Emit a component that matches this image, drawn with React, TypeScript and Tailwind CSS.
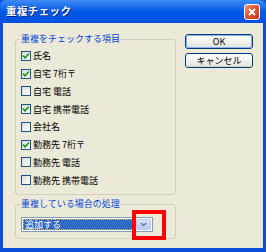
import { ChevronDown } from 'lucide-react';

const font = { fontFamily: '"Noto Sans CJK JP", "Noto Sans", sans-serif' };

const items = [
    { label: '氏名', checked: true },
    { label: '自宅 7桁〒', checked: true },
    { label: '自宅 電話', checked: false },
    { label: '自宅 携帯電話', checked: true },
    { label: '会社名', checked: false },
    { label: '勤務先 7桁〒', checked: true },
    { label: '勤務先 電話', checked: false },
    { label: '勤務先 携帯電話', checked: false },
];

function CheckBox({ checked }: { checked: boolean }) {
    return (
        <div className="w-[10px] h-[10px] border border-[#1c5180] bg-gradient-to-br from-[#dcdcd7] to-white flex items-center justify-center">
            {checked && (
                <svg width="8" height="8" viewBox="0 0 8 8">
                    <path d="M1 3.5 L3 5.8 L7 1.5" stroke="#21a121" strokeWidth="1.8" fill="none" />
                </svg>
            )}
        </div>
    );
}

function XpButton({ label, isDefault }: { label: string; isDefault?: boolean }) {
    return (
        <div className="h-[15px] w-[68px] rounded-[3px] border border-[#003c74] bg-gradient-to-b from-white to-[#e3e3db]">
            <div
                className={`h-full w-full rounded-[2px] flex items-center justify-center text-[9px] leading-none text-black ${
                    isDefault ? 'border border-[#8db2f3]' : 'border-b border-[#d6d0c5]'
                }`}
            >
                {label}
            </div>
        </div>
    );
}

export default function App() {
    return (
        <div className="relative w-[266px] h-[252px] flex flex-col bg-[#0b4fd9]" style={font}>
            {/* title bar */}
            <div className="h-[23px] flex items-center justify-between pl-[6px] pr-[6px] rounded-t-[6px] bg-gradient-to-b from-[#3d8cf5] via-[#0058e6] to-[#0050e0]">
                <span className="text-white font-bold text-[10.5px] leading-none tracking-[0.4px] [text-shadow:1px_1px_0_#0a1e8c]">
                    重複チェック
                </span>
                <div className="w-[16px] h-[16px] rounded-[3px] border border-white bg-gradient-to-br from-[#f0916f] via-[#e0512f] to-[#c53a1e] flex items-center justify-center">
                    <svg width="10" height="10" viewBox="0 0 10 10">
                        <path d="M2 2 L8 8 M8 2 L2 8" stroke="white" strokeWidth="2" />
                    </svg>
                </div>
            </div>

            {/* body */}
            <div className="flex-1 mx-[3px] mb-[4px] bg-[#ece9d8] flex pl-[12px] pt-[11px] gap-[9px]">
                <div className="flex flex-col gap-[4px]">
                    <fieldset className="w-[161px] h-[161px] border border-[#d0d0bf] rounded-[3px] pl-[5px]">
                        <legend className="text-[9px] leading-[10px] text-[#0046d5] px-0">重複をチェックする項目</legend>
                        <div className="flex flex-col pt-[3px]">
                            {items.map((it) => (
                                <div key={it.label} className="h-[17.75px] flex items-center gap-[2px]">
                                    <CheckBox checked={it.checked} />
                                    <span className="text-[9px] leading-none text-black">{it.label}</span>
                                </div>
                            ))}
                        </div>
                    </fieldset>
                    <fieldset className="w-[161px] h-[40px] border border-[#d0d0bf] rounded-[3px] pl-[5px]">
                        <legend className="text-[9px] leading-[10px] text-[#0046d5] px-0">重複している場合の処理</legend>
                        <div className="mt-[8px] w-[132px] h-[15px] border border-[#7f9db9] bg-white flex p-[1px]">
                            <div className="flex-1 bg-[#316ac5] border border-dotted border-[#f0c050] flex items-center pl-[1px]">
                                <span className="text-[9px] leading-none text-white">追加する</span>
                            </div>
                            <div className="w-[15px] rounded-[2px] border border-[#b9c9ef] bg-gradient-to-b from-[#d8e4fc] to-[#b6cbf6] flex items-center justify-center">
                                <ChevronDown size={9} strokeWidth={3} color="#4d6185" />
                            </div>
                        </div>
                    </fieldset>
                </div>
                <div className="flex flex-col gap-[4px]">
                    <XpButton label="OK" isDefault />
                    <XpButton label="キャンセル" />
                </div>
            </div>

            {/* red highlight */}
            <div className="absolute left-[132px] top-[210px] w-[34px] h-[30px] border-[4px] border-[#ff0000]" />
        </div>
    );
}
